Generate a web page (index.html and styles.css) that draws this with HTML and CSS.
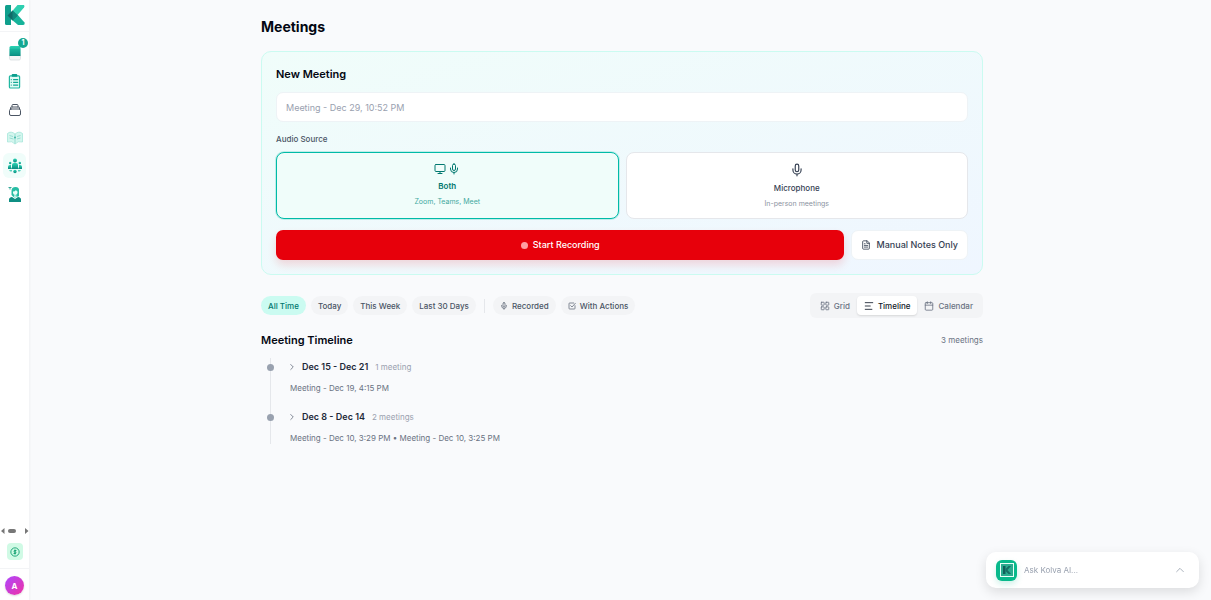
FILE: index.html
```html
<!DOCTYPE html>
<html lang="en">
<head>
    <meta charset="UTF-8">
    <meta name="viewport" content="width=device-width, initial-scale=1">
    <title>Meetings</title>
    <link rel="stylesheet" href="styles.css">
</head>
<body>
<!-- shared icons -->
<svg class="sprite" aria-hidden="true">
    <defs>
        <linearGradient id="teal" x1="0" y1="0" x2="0" y2="1">
            <stop offset="0" stop-color="#2bd4b4"/>
            <stop offset="1" stop-color="#0b8a80"/>
        </linearGradient>
    </defs>
    <symbol id="mic" viewBox="0 0 24 24">
        <path d="M12 2a3 3 0 0 0-3 3v7a3 3 0 0 0 6 0V5a3 3 0 0 0-3-3Z"/>
        <path d="M19 10v2a7 7 0 0 1-14 0v-2M12 19v3"/>
    </symbol>
</svg>

<div class="layout">
    <aside class="sidebar">
        <a class="logo" href="#" aria-label="Home">
            <svg viewBox="0 0 20 20" width="20" height="20">
                <path d="M0 1.500Q0 0 1.500 0H6V20H1.500Q0 20 0 18.500Z" fill="#0f9f8c"/>
                <path d="M6 7.500 12.500 0H19Q20 1 19 2.500L9.500 13.500 6 10Z" fill="#2fcfb0"/>
                <path d="M6 12 11.500 8.500 19.500 17.500Q20 20 18 20H13L6 14Z" fill="#17b39a"/>
                <path d="M2.500 10.500 7.500 5.500 12.500 10.500 7.500 15.500Z" fill="#116b68"/>
                <path d="M7.500 5.500 12.500 10.500 7.500 15.500Z" fill="#12877c"/>
            </svg>
        </a>
        <nav class="nav">
            <a class="nav-item" href="#" aria-label="Inbox">
                <svg viewBox="0 0 14 18" width="14" height="18">
                    <path d="M1.500 10h11v3.500q0 1.500-1.500 1.500H3Q1.500 15 1.500 13.500Z" fill="#f3f6f6" stroke="#d3dadd" stroke-width=".7"/>
                    <path d="M3 1h8q1.500 0 1.500 1.500V11h-11V2.500Q1.500 1 3 1Z" fill="url(#teal)"/>
                    <path d="M1.500 5h11M1.500 7h11M1.500 9h11" stroke="#0fa592" stroke-width=".6"/>
                </svg>
                <span class="badge">1</span>
            </a>
            <a class="nav-item" href="#" aria-label="Tasks">
                <svg viewBox="0 0 14 16" width="13" height="15">
                    <rect x="1.500" y="2" width="11" height="13" rx="1" fill="#e3fbf5" stroke="#22b8a2" stroke-width="1.300"/>
                    <rect x="4" y="0" width="6" height="3" rx="1" fill="#0d9f8e"/>
                    <path d="M3 6h1M5.500 6H11M3 9h1M5.500 9H11M3 12h1M5.500 12H11" stroke="#14a894" stroke-width="1.400"/>
                </svg>
            </a>
            <a class="nav-item" href="#" aria-label="Library">
                <svg class="line gray" viewBox="0 0 14 14" width="14" height="14">
                    <rect x="1.500" y="6" width="11" height="6.500" rx="1.500"/>
                    <path d="M2.500 6V4.800Q2.500 4 3.500 4h7q1 0 1 .8V6M4 4V2.500Q4 1.500 5 1.500h4q1 0 1 1V4"/>
                </svg>
            </a>
            <a class="nav-item" href="#" aria-label="Knowledge">
                <svg viewBox="0 0 16 14" width="16" height="14">
                    <path d="M.5 2.500Q4-.5 8 3q4-3.500 7.500-.5V11Q11 9.500 8 13 5 9.500.5 11Z" fill="#d3f6ee" stroke="#9fe4d7" stroke-width=".7"/>
                    <path d="M8 3v9.500M2.500 4.500 6 5.500M2.500 7l4 1M10 5.500l3.500-1M10 8l3.500-1" stroke="#6fcfc0" stroke-width=".6" fill="none"/>
                    <circle cx="8" cy="6.500" r="1" fill="#3fb5a6"/>
                </svg>
            </a>
            <a class="nav-item current" href="#" aria-label="Meetings" aria-current="page">
                <svg viewBox="0 0 16 16" width="16" height="16" fill="url(#teal)">
                    <circle cx="8" cy="2.500" r="2"/>
                    <path d="M5 9V7q0-2 2-2h2q2 0 2 2v2l1 2H4Z"/>
                    <circle cx="3.200" cy="5" r="1.200"/>
                    <circle cx="12.800" cy="5" r="1.200"/>
                    <path d="M1 11V9q0-2 2-2h1v4ZM15 11V9q0-2-2-2h-1v4Z"/>
                    <circle cx="8" cy="13.500" r="1.700"/>
                    <path d="M2 12.300h3v1H3ZM11 12.300h3l-1 1h-2Z"/>
                </svg>
            </a>
            <a class="nav-item" href="#" aria-label="Coach">
                <svg viewBox="0 0 14 16" width="14" height="16">
                    <path d="M1 16v-2.500Q1 11.500 4 11l3 2 3-2q3 .5 3 2.500V16Z" fill="#0f8f83"/>
                    <path d="M3.500 9V5Q3.500 1 7.500 1T11 5v5q-1 1-2 .5L7 12l-2-1.500Z" fill="#27bda4"/>
                    <path d="M5 5.500Q7 5.500 8 4q.5 1 1.500 1.500V7Q9 9 7.200 9T5 7Z" fill="#eafff9"/>
                    <path d="M6 9.300h2.500v2L7.200 12.500 6 11.300Z" fill="#b8f0e3"/>
                    <path d="M.5 1.500h3M2 1.500v2" stroke="#36a898"/>
                </svg>
            </a>
        </nav>
        <div class="scroller" aria-hidden="true">
            <svg viewBox="0 0 30 8" width="30" height="8" fill="#777">
                <path d="M1 4 4.500 1v6ZM28.500 4 25 1v6Z"/>
                <rect x="8" y="2" width="8" height="4" rx="2"/>
            </svg>
        </div>
        <a class="credits" href="#" aria-label="Credits">
            <svg viewBox="0 0 24 24" width="10" height="10">
                <circle cx="12" cy="12" r="10"/>
                <path d="M15.500 8.500h-5a2 2 0 0 0 0 3.500h3a2 2 0 0 1 0 3.500h-5M12 18V6"/>
            </svg>
        </a>
        <div class="account">
            <button class="avatar" type="button" aria-label="Account">A</button>
        </div>
    </aside>

    <main class="main">
        <div class="content">
            <h1>Meetings</h1>

            <form class="card">
                <h2>New Meeting</h2>
                <input class="title-input" type="text" aria-label="Meeting title" placeholder="Meeting - Dec 29, 10:52 PM">
                <p class="label" id="source">Audio Source</p>
                <div class="sources" role="group" aria-labelledby="source">
                    <button class="source selected" type="button" aria-pressed="true">
                        <span class="icons">
                            <svg class="line" viewBox="0 0 24 24" width="12" height="12"><rect x="2" y="3" width="20" height="14" rx="2"/><path d="M8 21h8M12 17v4"/></svg>
                            <svg class="line" width="12" height="12"><use href="#mic"/></svg>
                        </span>
                        <span class="name">Both</span>
                        <span class="hint">Zoom, Teams, Meet</span>
                    </button>
                    <button class="source" type="button" aria-pressed="false">
                        <span class="icons">
                            <svg class="line" width="14" height="14"><use href="#mic"/></svg>
                        </span>
                        <span class="name">Microphone</span>
                        <span class="hint">In-person meetings</span>
                    </button>
                </div>
                <div class="actions">
                    <button class="record" type="button"><span class="rec-dot"></span>Start Recording</button>
                    <button class="notes" type="button">
                        <svg class="line" viewBox="0 0 24 24" width="10" height="10"><path d="M14 2H6a2 2 0 0 0-2 2v16a2 2 0 0 0 2 2h12a2 2 0 0 0 2-2V8ZM14 2v6h6M8 9h2M8 13h8M8 17h8"/></svg>
                        Manual Notes Only
                    </button>
                </div>
            </form>

            <div class="toolbar">
                <div class="filters">
                    <button class="pill active" type="button">All Time</button>
                    <button class="pill" type="button">Today</button>
                    <button class="pill" type="button">This Week</button>
                    <button class="pill" type="button">Last 30 Days</button>
                    <span class="divider"></span>
                    <button class="pill" type="button">
                        <svg class="line" width="8" height="8"><use href="#mic"/></svg>
                        Recorded
                    </button>
                    <button class="pill" type="button">
                        <svg class="line" viewBox="0 0 24 24" width="8" height="8"><path d="M21 11v8a2 2 0 0 1-2 2H5a2 2 0 0 1-2-2V5a2 2 0 0 1 2-2h12M8 11l4 4L22 4"/></svg>
                        With Actions
                    </button>
                </div>
                <div class="views">
                    <button class="view" type="button">
                        <svg class="line" viewBox="0 0 24 24" width="10" height="10"><rect x="3" y="3" width="7" height="7" rx="1"/><rect x="14" y="3" width="7" height="7" rx="1"/><rect x="3" y="14" width="7" height="7" rx="1"/><rect x="14" y="14" width="7" height="7" rx="1"/></svg>
                        Grid
                    </button>
                    <button class="view active" type="button">
                        <svg class="line" viewBox="0 0 24 24" width="10" height="10"><path d="M3 4h18M3 12h12M3 20h16"/></svg>
                        Timeline
                    </button>
                    <button class="view" type="button">
                        <svg class="line" viewBox="0 0 24 24" width="10" height="10"><rect x="3" y="4" width="18" height="18" rx="2"/><path d="M8 2v4M16 2v4M3 10h18"/></svg>
                        Calendar
                    </button>
                </div>
            </div>

            <section>
                <div class="section-head">
                    <h2>Meeting Timeline</h2>
                    <span class="total">3 meetings</span>
                </div>
                <ul class="timeline">
                    <li class="week">
                        <button class="week-toggle" type="button" aria-expanded="false">
                            <svg class="line" viewBox="0 0 24 24" width="10" height="10"><path d="m9 6 6 6-6 6"/></svg>
                            <span class="range">Dec 15 - Dec 21</span>
                            <span class="count">1 meeting</span>
                        </button>
                        <p class="summary">Meeting - Dec 19, 4:15 PM</p>
                    </li>
                    <li class="week">
                        <button class="week-toggle" type="button" aria-expanded="false">
                            <svg class="line" viewBox="0 0 24 24" width="10" height="10"><path d="m9 6 6 6-6 6"/></svg>
                            <span class="range">Dec 8 - Dec 14</span>
                            <span class="count">2 meetings</span>
                        </button>
                        <p class="summary">Meeting - Dec 10, 3:29 PM • Meeting - Dec 10, 3:25 PM</p>
                    </li>
                </ul>
            </section>
        </div>
    </main>
</div>

<div class="assistant">
    <span class="assistant-logo">
        <svg viewBox="0 0 14 14" width="14" height="14">
            <rect x=".5" y=".5" width="13" height="13" fill="#2bab8f" stroke="#e8fff8"/>
            <path d="M3 3h2.500v8H3Z" fill="#105f59"/>
            <path d="M5.500 6 8.500 3H11L7.500 7 11 11H8.500L5.500 8Z" fill="#176f65"/>
        </svg>
    </span>
    <input type="text" aria-label="Ask Kolva AI" placeholder="Ask Kolva AI...">
    <button class="expand" type="button" aria-label="Expand">
        <svg class="line" viewBox="0 0 24 24" width="10" height="10"><path d="m4 16 8-8 8 8"/></svg>
    </button>
</div>
</body>
</html>
```
FILE: styles.css
```css
* {
    box-sizing: border-box;
}

body {
    margin: 0;
    background: #f9fafc;
    color: #030712;
    font-family: Inter, "Liberation Sans", sans-serif;
    font-size: 8px;
    line-height: 12px;
}

h1, h2, p, ul {
    margin: 0;
    padding: 0;
}

button, input {
    margin: 0;
    padding: 0;
    border: 0;
    background: none;
    color: inherit;
    font: inherit;
}

button {
    cursor: pointer;
}

svg {
    display: block;
    flex: none;
}

.sprite {
    position: absolute;
    width: 0;
    height: 0;
}

.line {
    fill: none;
    stroke: currentColor;
    stroke-width: 2;
    stroke-linecap: round;
    stroke-linejoin: round;
}

.layout {
    display: flex;
    min-height: 100vh;
}

/* sidebar */
.sidebar {
    display: flex;
    flex-direction: column;
    width: 30px;
    background: #fff;
    border-right: 1px solid #f3f4f6;
    box-shadow: 0 0 2px rgba(0, 0, 0, .04);
}

.logo {
    display: flex;
    justify-content: center;
    padding: 5px 0 6px;
    border-bottom: 1px solid #f3f4f6;
}

.nav {
    display: flex;
    flex-direction: column;
    align-items: center;
    gap: 3px;
    padding-top: 9px;
}

.nav-item {
    position: relative;
    display: flex;
    align-items: center;
    justify-content: center;
    width: 23px;
    height: 25px;
    border-radius: 6px;
}

.nav-item.current {
    background: #f0fdfa;
}

.gray {
    color: #4b5563;
    stroke-width: 1;
}

.badge {
    position: absolute;
    top: -3px;
    right: -2px;
    width: 10px;
    height: 10px;
    border-radius: 50%;
    background: #14a892;
    color: #fff;
    font-size: 7px;
    font-weight: 700;
    line-height: 10px;
    text-align: center;
}

.scroller {
    margin-top: auto;
    padding-bottom: 8px;
}

.credits {
    display: flex;
    align-items: center;
    justify-content: center;
    align-self: center;
    width: 16px;
    height: 17px;
    border-radius: 4px;
    background: #d0fae5;
    fill: none;
    stroke: #009966;
    stroke-width: 2;
}

.account {
    display: flex;
    justify-content: center;
    margin-top: 8px;
    padding: 7px 0 5px;
    border-top: 1px solid #f3f4f6;
}

.avatar {
    width: 19px;
    height: 19px;
    border-radius: 50%;
    background: linear-gradient(135deg, #ad46ff, #f032a4);
    box-shadow: 0 1px 2px rgba(0, 0, 0, .15);
    color: #fff;
    font-weight: 700;
}

/* page */
.main {
    flex: 1;
    padding: 18px 12px 18px 15px;
}

.content {
    max-width: 722px;
    margin: 0 auto;
}

h1 {
    font-size: 14px;
    font-weight: 700;
    line-height: 18px;
}

h2 {
    font-size: 11px;
    font-weight: 600;
    line-height: 16px;
}

.card {
    margin-top: 15px;
    padding: 14px;
    border: 1px solid #cbfbf1;
    border-radius: 10px;
    background: linear-gradient(to bottom right, #f0fdfa, #eff6ff);
}

.title-input {
    display: block;
    width: 100%;
    height: 30px;
    margin-top: 10px;
    padding: 0 9px;
    border: 1px solid #eef3f6;
    border-radius: 7px;
    background: #fff;
    font-size: 9px;
}

input::placeholder {
    color: #99a1af;
    opacity: 1;
}

.label {
    margin-top: 11px;
    color: #4a5565;
    font-weight: 500;
}

.sources {
    display: grid;
    grid-template-columns: 1fr 1fr;
    gap: 7px;
    margin-top: 7px;
}

.source {
    display: flex;
    flex-direction: column;
    align-items: center;
    padding: 10px 9px 8px;
    border: 1px solid #e5e7eb;
    border-radius: 8px;
    background: #fff;
    color: #364153;
}

.source.selected {
    border-color: #00bba7;
    background: #f0fdfa;
    box-shadow: 0 0 0 1px rgba(0, 187, 167, .2);
    color: #00786f;
}

.icons {
    display: flex;
    gap: 2px;
}

.name {
    margin-top: 5px;
    font-weight: 500;
}

.selected .name {
    font-weight: 600;
}

.hint {
    margin-top: 4px;
    color: #8b93a1;
    font-size: 7px;
}

.selected .hint {
    color: #43a99f;
}

.actions {
    display: flex;
    gap: 7px;
    margin-top: 11px;
}

.record, .notes {
    display: flex;
    align-items: center;
    justify-content: center;
    gap: 5px;
    height: 30px;
    border-radius: 7px;
    font-size: 9px;
    font-weight: 500;
}

.record {
    flex: 1;
    background: #e7000b;
    box-shadow: 0 5px 8px rgba(231, 0, 11, .14);
    color: #fff;
}

.rec-dot {
    width: 7px;
    height: 7px;
    border-radius: 50%;
    background: #ff9da2;
}

.notes {
    padding: 0 9px;
    border: 1px solid #eef3f6;
    background: #fff;
    color: #364153;
}

/* filters and view switch */
.toolbar {
    display: flex;
    align-items: center;
    justify-content: space-between;
    margin-top: 18px;
}

.filters {
    display: flex;
    align-items: center;
    gap: 5px;
}

.pill {
    display: flex;
    align-items: center;
    gap: 4px;
    height: 19px;
    padding: 0 7px;
    border-radius: 10px;
    background: #f3f4f6;
    color: #4a5565;
    font-weight: 500;
}

.pill.active {
    background: #cbfbf1;
    color: #00786f;
}

.divider {
    width: 1px;
    height: 14px;
    margin: 0 3px;
    background: #e5e7eb;
}

.views {
    display: flex;
    padding: 3px;
    border-radius: 6px;
    background: #f3f4f6;
}

.view {
    display: flex;
    align-items: center;
    gap: 4px;
    height: 19px;
    padding: 0 7px;
    border-radius: 4px;
    color: #6a7282;
    font-weight: 500;
}

.view.active {
    background: #fff;
    box-shadow: 0 1px 2px rgba(0, 0, 0, .12);
    color: #101828;
}

/* timeline */
.section-head {
    display: flex;
    align-items: center;
    justify-content: space-between;
    margin-top: 14px;
}

.total {
    color: #6a7282;
}

.timeline {
    display: flex;
    flex-direction: column;
    gap: 14px;
    margin: 10px 0 0 9px;
    border-left: 1px solid #e5e7eb;
    list-style: none;
}

.week {
    position: relative;
    padding-left: 16px;
}

.week::before {
    content: "";
    position: absolute;
    top: 6px;
    left: -4px;
    width: 7px;
    height: 7px;
    border-radius: 50%;
    background: #99a1af;
}

.week-toggle {
    display: flex;
    align-items: center;
    gap: 7px;
    height: 18px;
    color: #99a1af;
}

.week-toggle svg {
    margin-right: -2px;
    color: #6a7282;
}

.range {
    color: #1e2939;
    font-size: 9px;
    font-weight: 600;
}

.summary {
    margin-top: 6px;
    padding-left: 3px;
    color: #6a7282;
}

/* assistant bar */
.assistant {
    position: fixed;
    right: 12px;
    bottom: 12px;
    display: flex;
    align-items: center;
    gap: 7px;
    width: 213px;
    height: 36px;
    padding: 0 14px 0 10px;
    border-radius: 10px;
    background: #fff;
    box-shadow: 0 4px 12px rgba(0, 0, 0, .12);
}

.assistant-logo {
    display: flex;
    align-items: center;
    justify-content: center;
    width: 21px;
    height: 21px;
    border-radius: 6px;
    background: #08b98b;
    box-shadow: 0 3px 6px rgba(0, 187, 140, .2);
}

.assistant input {
    flex: 1;
    min-width: 0;
}

.expand {
    color: #99a1af;
}
```
